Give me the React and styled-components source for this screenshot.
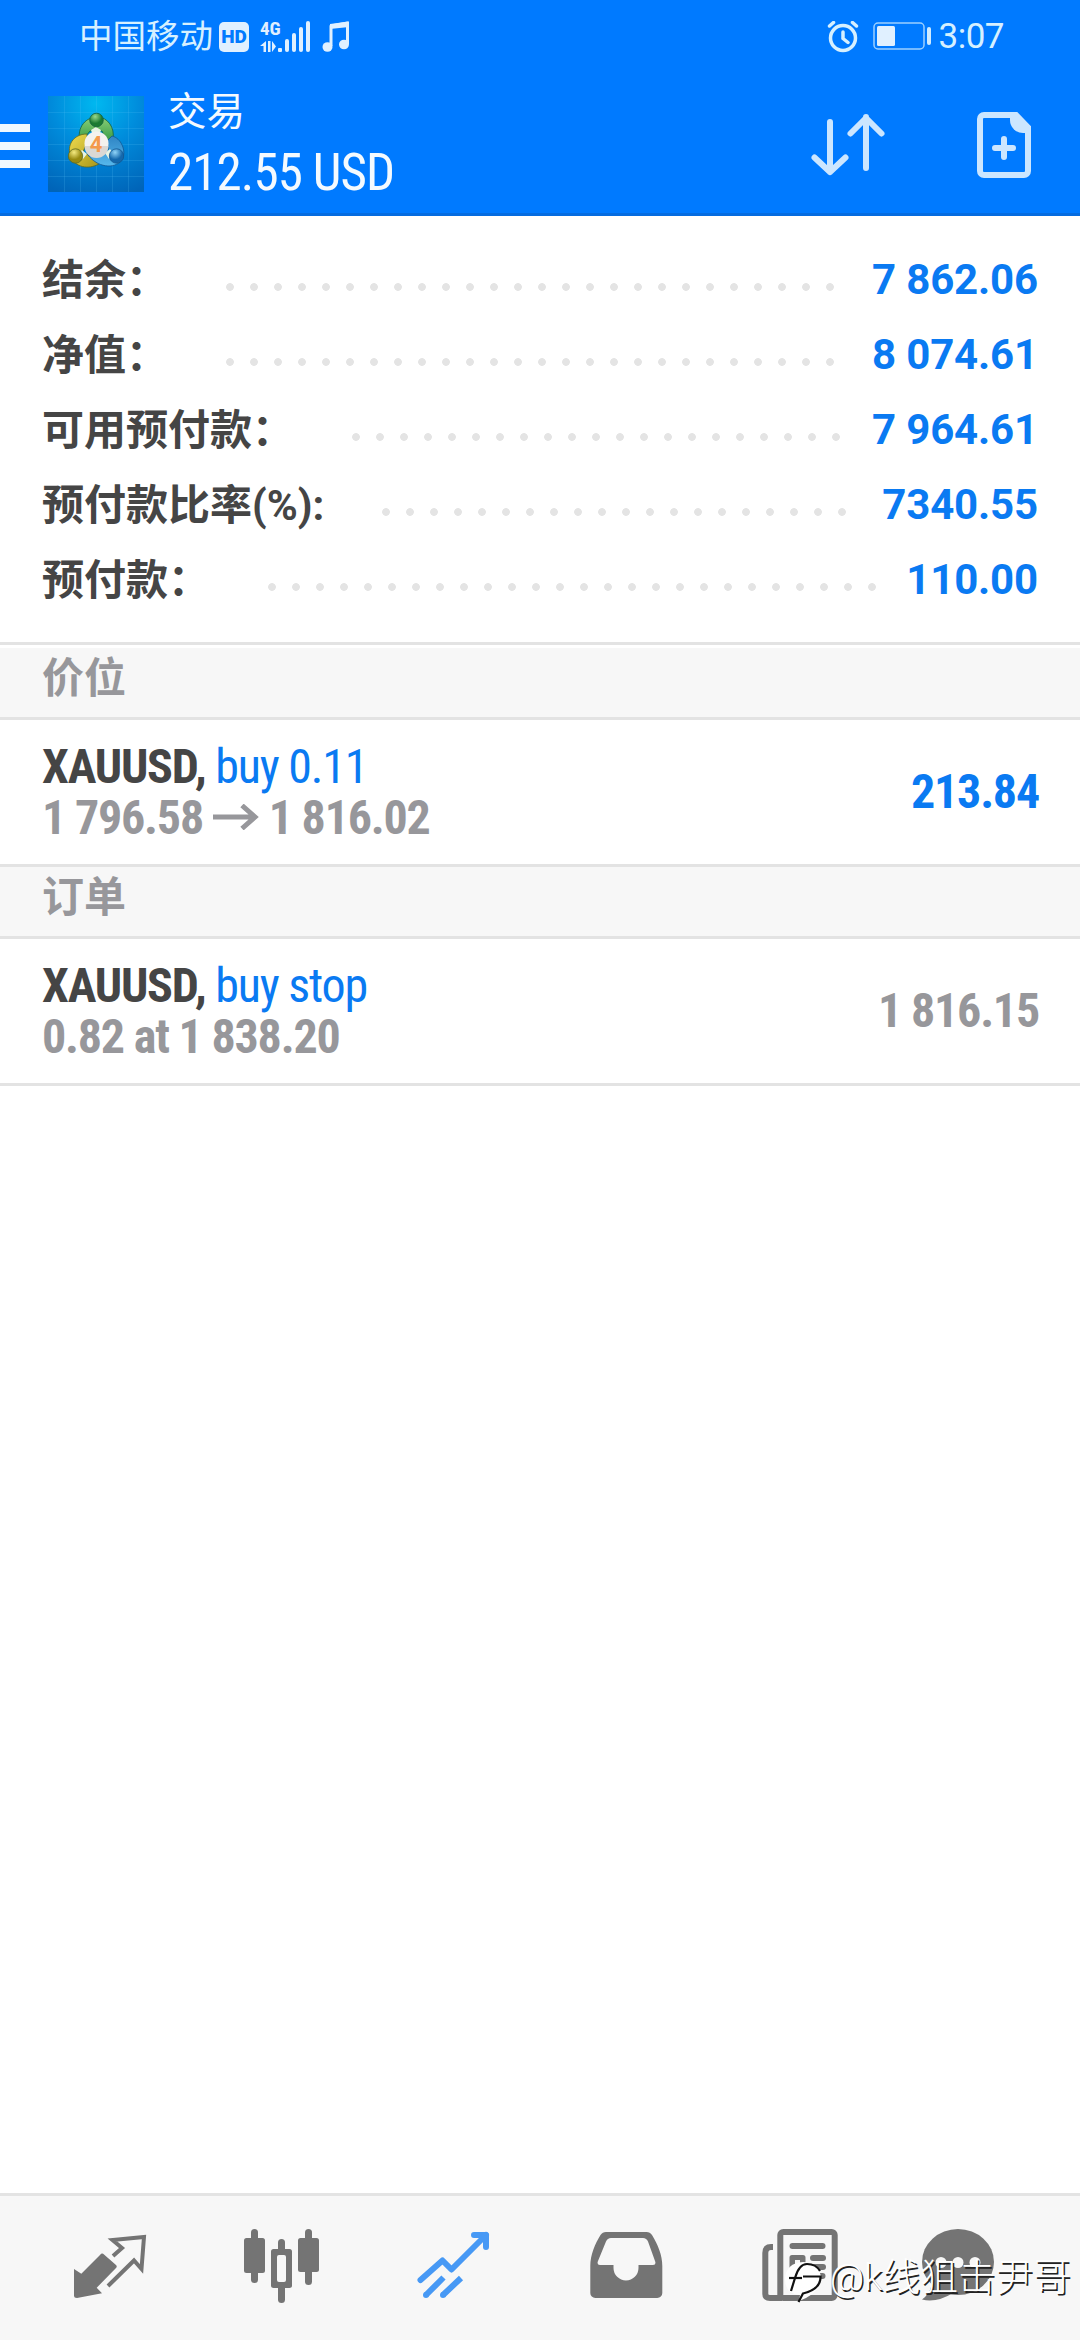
import React from 'react'

import styled, {createGlobalStyle} from "styled-components";

const ACCOUNT = [
    {label: "结余：", value: "7 862.06"},
    {label: "净值：", value: "8 074.61"},
    {label: "可用预付款：", value: "7 964.61"},
    {label: "预付款比率(%):", value: "7340.55"},
    {label: "预付款：", value: "110.00"},
];

const App = () => {
    return (
        <Screen>
            <GlobalStyle />
            <Header>
                <StatusBar>
                    <Carrier>中国移动</Carrier>
                    <HdBadge>HD</HdBadge>
                    <SignalIcon />
                    <MusicIcon />
                    <Spacer />
                    <AlarmIcon />
                    <BatteryIcon />
                    <Clock>3:07</Clock>
                </StatusBar>
                <Toolbar>
                    <Hamburger>
                        <i />
                        <i />
                        <i />
                    </Hamburger>
                    <LogoIcon />
                    <Titles>
                        <Title>交易</Title>
                        <Profit>212.55 USD</Profit>
                    </Titles>
                    <Spacer />
                    <SortIcon />
                    <NewOrderIcon />
                </Toolbar>
            </Header>
            <Summary>
                {ACCOUNT.map(({label, value}) => (
                    <SummaryRow key={label}>
                        <SummaryLabel>{label}</SummaryLabel>
                        <Leader />
                        <SummaryValue>{value}</SummaryValue>
                    </SummaryRow>
                ))}
            </Summary>
            <SectionTitle $inset>价位</SectionTitle>
            <Trade>
                <div>
                    <TradeLine><b>XAUUSD,</b> <span>buy 0.11</span></TradeLine>
                    <TradePrice>1 796.58 <ArrowIcon /> 1 816.02</TradePrice>
                </div>
                <TradeValue $active>213.84</TradeValue>
            </Trade>
            <SectionTitle>订单</SectionTitle>
            <Trade>
                <div>
                    <TradeLine><b>XAUUSD,</b> <span>buy stop</span></TradeLine>
                    <TradePrice>0.82 at 1 838.20</TradePrice>
                </div>
                <TradeValue>1 816.15</TradeValue>
            </Trade>
            <Spacer />
            <TabBar>
                <QuotesIcon />
                <CandlesIcon />
                <TrendIcon />
                <InboxIcon />
                <NewsIcon />
                <ChatIcon />
                <Watermark>
                    <WatermarkLogo />
                    <span>@k线狙击尹哥</span>
                </Watermark>
            </TabBar>
        </Screen>
    )
}

const SignalIcon = () => (
    <Signal>
        <SignalType>4G</SignalType>
        <svg width="52" height="32" viewBox="0 0 52 32" fill="#e0f0ff">
            <path d="M6 20v11H3.500v-6H0zM8 20h2.500v11H8zM12 20v11l4-5.500z" />
            <rect x="18" y="27" width="4" height="4" rx="1" />
            <rect x="25" y="18" width="4" height="13" rx="2" />
            <rect x="32" y="12" width="4" height="19" rx="2" />
            <rect x="39" y="6" width="4" height="25" rx="2" />
            <rect x="46" y="0" width="4" height="31" rx="2" />
        </svg>
    </Signal>
)

const MusicIcon = () => (
    <Music width="28" height="32" viewBox="0 0 28 32" fill="#e0f0ff">
        <path d="M9 25V5L25.500 2V23" fill="none" stroke="#e0f0ff" strokeWidth="3" strokeLinejoin="round" />
        <path d="M8 3L27 0.500V6L8 8z" />
        <ellipse cx="5.500" cy="26" rx="5" ry="4.800" />
        <ellipse cx="22" cy="23.500" rx="5" ry="4.800" />
    </Music>
)

const AlarmIcon = () => (
    <svg width="32" height="32" viewBox="0 0 32 32" fill="none" stroke="#d6f0ff" strokeWidth="3.500" strokeLinecap="round">
        <circle cx="16" cy="17" r="12.500" />
        <path d="M16 11v6.500l5 4M2.500 5l4-3.500M29.500 5l-4-3.500" />
    </svg>
)

const BatteryIcon = () => (
    <Battery width="59" height="29" viewBox="0 0 59 29">
        <rect x="1" y="1" width="50" height="26" rx="4" fill="none" stroke="#9cd0ff" strokeWidth="1.500" />
        <rect x="4" y="4" width="18" height="20" rx="1.500" fill="#e0f0ff" />
        <rect x="54" y="5" width="4" height="18" rx="2" fill="#d0ebff" />
    </Battery>
)

const LogoIcon = () => (
    <Logo width="96" height="96" viewBox="0 0 96 96">
        <defs>
            <radialGradient id="sky" cx="0.5" cy="0.08" r="1">
                <stop offset="0" stopColor="#00b8f0" />
                <stop offset="0.45" stopColor="#008cdc" />
                <stop offset="1" stopColor="#0064b8" />
            </radialGradient>
            <linearGradient id="green" x2="0" y2="1">
                <stop offset="0" stopColor="#8ccf78" />
                <stop offset="1" stopColor="#23903a" />
            </linearGradient>
            <linearGradient id="yellow" x2="1" y2="1">
                <stop offset="0" stopColor="#f0dc50" />
                <stop offset="1" stopColor="#a89618" />
            </linearGradient>
            <linearGradient id="blue" x2="0" y2="1">
                <stop offset="0" stopColor="#2f84c4" />
                <stop offset="1" stopColor="#56b8ec" />
            </linearGradient>
            <radialGradient id="headGreen" cx="0.4" cy="0.25">
                <stop offset="0" stopColor="#9ada8c" />
                <stop offset="1" stopColor="#1b7a32" />
            </radialGradient>
            <radialGradient id="headYellow" cx="0.4" cy="0.25">
                <stop offset="0" stopColor="#f4ea80" />
                <stop offset="1" stopColor="#988a10" />
            </radialGradient>
            <radialGradient id="headBlue" cx="0.4" cy="0.25">
                <stop offset="0" stopColor="#90d4f8" />
                <stop offset="1" stopColor="#1468ac" />
            </radialGradient>
        </defs>
        <rect width="96" height="96" fill="url(#sky)" />
        <path
            d="M0 16.500H96M0 32.500H96M0 48.500H96M0 64.500H96M0 80.500H96M16.500 0V96M32.500 0V96M48.500 0V96M64.500 0V96M80.500 0V96"
            stroke="#60c8f8"
            strokeOpacity="0.18"
        />
        <g stroke="#14603c" strokeWidth="0.8">
            <path d="M32 47C28 30 39 21 49 21C60 21 67 32 65 43L61 50L54 35L42 35Z" fill="url(#green)" />
            <path d="M39 38C25 38 18 50 23 61C27 71 40 74 51 68L42 60L35 56L39 46Z" fill="url(#yellow)" stroke="#5d6a20" />
            <path d="M64 40C73 42 79 55 74 64C66 74 49 71 40 59L52 59L62 56L58 46Z" fill="url(#blue)" stroke="#125792" />
        </g>
        <path d="M43 34l5-3 5 3-2 6h-6zM34 54l5 4-4 5-5-5zM62 53l-5 4 4 6 5-4z" fill="#e8f4e4" />
        <circle cx="48.500" cy="24" r="6.800" fill="url(#headGreen)" stroke="#14603c" strokeWidth="0.800" />
        <circle cx="27.500" cy="60" r="7.200" fill="url(#headYellow)" stroke="#5d6a20" strokeWidth="0.800" />
        <circle cx="68.500" cy="60" r="7.200" fill="url(#headBlue)" stroke="#125792" strokeWidth="0.800" />
        <circle cx="48.500" cy="47.500" r="12" fill="#f4f2ee" />
        <path d="M36.500 50h24a12 12 0 0 1-24 0z" fill="#dad8d4" />
        <text x="48" y="55.500" textAnchor="middle" fontFamily="Roboto" fontWeight="700" fontSize="22" fill="#f49a4c">4</text>
    </Logo>
)

const SortIcon = () => (
    <Sort width="76" height="66" viewBox="0 0 76 66" fill="none" stroke="#cce6ff" strokeWidth="6" strokeLinecap="round" strokeLinejoin="round">
        <path d="M20 10V60M4.500 45.500L20 60L35.500 45.500" />
        <path d="M56 56V5M40.500 21.500L56 6L71.500 21.500" />
    </Sort>
)

const NewOrderIcon = () => (
    <svg width="56" height="68" viewBox="0 0 56 68" fill="none" stroke="#cce6ff" strokeWidth="6">
        <path d="M8 4H40L52 16.500V60a4 4 0 0 1-4 4H8a4 4 0 0 1-4-4V8a4 4 0 0 1 4-4z" />
        <path d="M34 4H41L54 17V22H47a13 13 0 0 1-13-13z" fill="#cce6ff" stroke="none" />
        <path d="M28 28V46M19 37H37" strokeLinecap="round" />
    </svg>
)

const ArrowIcon = () => (
    <Arrow width="46" height="26" viewBox="0 0 46 26" fill="none" stroke="#97979b" strokeWidth="5">
        <path d="M0 13H42M29 1.500L42 13L29 24.500" />
    </Arrow>
)

const QuotesIcon = () => (
    <TabIcon viewBox="0 0 96 96">
        <path d="M12 49L19.300 53.700L38 35Q40 32.500 42 34.500L54 45Q55.500 46.500 54 48L34.700 67.700L40 73.300L15 78Q12 78 12 75.500z" />
        <path d="M51 36L60 28L50.500 20L82 17L79.500 49L72 40.500L46 66" fill="none" stroke="#747474" strokeWidth="4" />
    </TabIcon>
)

const CandlesIcon = () => (
    <TabIcon viewBox="0 0 96 96">
        <rect x="17" y="9" width="7" height="54" rx="3.500" />
        <rect x="10" y="18" width="21" height="35" rx="2.500" />
        <rect x="44" y="19" width="7" height="64" rx="3.500" />
        <rect x="37" y="29" width="21" height="39" rx="2.500" />
        <rect x="43" y="35" width="9" height="27" rx="2" fill="#f7f7f7" />
        <rect x="71" y="9" width="7" height="56" rx="3.500" />
        <rect x="64" y="18" width="21" height="34" rx="2.500" />
    </TabIcon>
)

const TrendIcon = () => (
    <TabIcon viewBox="0 0 96 96">
        <g fill="none" stroke="#4799f5" strokeWidth="6" strokeLinejoin="round">
            <path d="M14.500 60L36.500 40.500L45.500 49.500L80 15" strokeLinecap="round" />
            <path d="M68 15H80V27" strokeLinecap="round" />
            <path d="M20 75L37.500 57.500M37 75L55 58" />
        </g>
        <circle cx="20" cy="75" r="3" fill="#4799f5" />
        <circle cx="37" cy="75" r="3" fill="#4799f5" />
    </TabIcon>
)

const InboxIcon = () => (
    <TabIcon viewBox="0 0 96 96">
        <path
            fillRule="evenodd"
            d="M28 12H68.500Q72 12 74 15C80 25 84.300 35 84.300 46V73a5 5 0 0 1-5 5H17.300a5 5 0 0 1-5-5V46C12.300 35 17 24 22.500 15Q24.500 12 28 12zM33 18Q29.500 18 28 21.500L20 41Q18.500 45 22 45H35.500V48a12.500 12.500 0 0 0 25 0V45H75Q78.500 45 77 41L70 21.500Q68.500 18 65 18z"
        />
    </TabIcon>
)

const NewsIcon = () => (
    <TabIcon viewBox="0 0 96 96">
        <g fill="none" stroke="#747474" strokeWidth="6">
            <rect x="30.300" y="12" width="54.400" height="66" rx="3" />
            <path d="M23 27H21Q15.300 27 15.300 33V74Q15.300 78 20 78H32" />
        </g>
        <rect x="39.500" y="23" width="36" height="6" rx="3" />
        <path fillRule="evenodd" d="M42 35H53a2.500 2.500 0 0 1 2.500 2.500V50H39.500V37.500A2.500 2.500 0 0 1 42 35zM45 40V45H50V40z" />
        <rect x="60" y="35" width="16" height="6" rx="3" />
        <rect x="60" y="44" width="16" height="6" rx="3" />
        <rect x="39.500" y="53" width="36" height="6" rx="3" />
    </TabIcon>
)

const ChatIcon = () => (
    <TabIcon viewBox="0 0 96 96">
        <ellipse cx="48" cy="42" rx="36" ry="33" />
        <path d="M22 62Q21 73 12 79.500Q27 83 43 73z" />
        <g fill="#f7f7f7">
            <circle cx="31" cy="42.500" r="5.500" />
            <circle cx="48" cy="42.500" r="5.500" />
            <circle cx="65" cy="42.500" r="5.500" />
        </g>
    </TabIcon>
)

const WatermarkLogo = () => (
    <LogoMark width="45" height="46" viewBox="0 0 45 46">
        <path d="M18 8A18 17 0 0 1 36 24Q36 39 14 47L15 41Q0 40 0 25Q1 9 18 8z" fill="#fff" />
        <g fill="none" stroke="#111" strokeWidth="2.200">
            <path d="M6 37L10 24Q14 10 22 10Q31 10 35 17" />
            <path d="M4 24H17" />
            <path d="M18 22.500H35.500Q36 35 18 39.500L13.500 48" />
        </g>
    </LogoMark>
)

const GlobalStyle = createGlobalStyle`
    * {
        box-sizing: border-box;
    }

    body {
        margin: 0;
        background: #fff;
        font-family: Roboto, "Noto Sans CJK SC", sans-serif;
    }

    svg {
        display: block;
        flex-shrink: 0;
    }
`;

const Screen = styled.div`
    display: flex;
    flex-direction: column;
    width: 1080px;
    height: 2340px;
    overflow: hidden;
`;

const Spacer = styled.div`
    flex: 1;
`;

const Header = styled.header`
    height: 216px;
    background: #007aff;
    border-bottom: 3px solid #056ce0;
`;

const StatusBar = styled.div`
    display: flex;
    align-items: center;
    height: 72px;
    padding: 1px 76px 0 79px;
`;

const Carrier = styled.span`
    font-size: 33.500px;
    line-height: 40px;
    color: #d6f0ff;
`;

const HdBadge = styled.span`
    width: 30px;
    height: 30px;
    margin-left: 6px;
    border-radius: 5px;
    background: #e0f0ff;
    color: #007aff;
    font-size: 19px;
    font-weight: 900;
    line-height: 30px;
    text-align: center;
`;

const Signal = styled.div`
    position: relative;
    margin-left: 11px;
`;

const SignalType = styled.span`
    position: absolute;
    left: 0;
    top: -2px;
    font-size: 19px;
    font-weight: 700;
    font-stretch: 75%;
    line-height: 19px;
    color: #e0f0ff;
`;

const Music = styled.svg`
    margin-left: 10px;
`;

const Battery = styled.svg`
    margin-left: 14px;
`;

const Clock = styled.span`
    margin-left: 7px;
    font-size: 35px;
    letter-spacing: -0.500px;
    color: #d6f0ff;
`;

const Toolbar = styled.div`
    display: flex;
    align-items: center;
    height: 141px;
    padding: 4px 48px 0 0;
`;

const Hamburger = styled.div`
    display: grid;
    gap: 10px;
    width: 30px;
    padding-top: 2px;

    i {
        height: 8px;
        background: #f0f8ff;
    }
`;

const Logo = styled.svg`
    margin: -1px 0 0 18px;
`;

const Titles = styled.div`
    margin-left: 24px;
    color: #f4faff;
`;

const Title = styled.div`
    font-size: 38.500px;
    line-height: 56px;
`;

const Profit = styled.div`
    font-family: "Roboto Condensed", Roboto, sans-serif;
    font-stretch: 75%;
    font-size: 51px;
    line-height: 65px;
    letter-spacing: -0.900px;
`;

const Sort = styled.svg`
    margin-right: 90px;
`;

const Summary = styled.section`
    height: 429px;
    padding: 26px 42px 0;
    border-bottom: 3px solid #e3e3e3;
    color: #454545;
`;

const SummaryRow = styled.div`
    display: flex;
    height: 75px;
    line-height: 75px;
    font-size: 42px;
    font-weight: 700;
`;

const SummaryLabel = styled.span`
    padding-top: 1px;
    white-space: nowrap;
`;

const Leader = styled.span`
    flex: 1;
    height: 8px;
    margin: 41px 26px 0 58px;
    background: radial-gradient(circle at 4px 4px, #e4e4e4 3.500px, transparent 4.200px) 0 0 / 24px 8px repeat-x;
`;

const SummaryValue = styled.span`
    color: #0a7af2;
    letter-spacing: -0.150px;
`;

const SectionTitle = styled.h2`
    height: ${({$inset}) => $inset ? "75px" : "72px"};
    margin: 0;
    padding-left: 42px;
    border-top: ${({$inset}) => $inset ? "3px solid #fff" : "0"};
    border-bottom: 3px solid #e3e3e3;
    background: #f7f7f7;
    color: #97979b;
    font-size: 42px;
    font-weight: 700;
    line-height: 62px;
`;

const Trade = styled.div`
    display: flex;
    justify-content: space-between;
    align-items: center;
    height: 147px;
    padding: 0 41px 0 42px;
    border-bottom: 3px solid #e3e3e3;
    font-family: "Roboto Condensed", Roboto, sans-serif;
    font-stretch: 75%;
    font-size: 48px;
    line-height: 51px;
    letter-spacing: -1.200px;
`;

const TradeLine = styled.div`
    color: #454545;

    span {
        color: #0a7af2;
    }
`;

const TradePrice = styled.div`
    color: #97979b;
    font-weight: 700;
`;

const Arrow = styled.svg`
    display: inline-block;
    vertical-align: 4px;
`;

const TradeValue = styled.span`
    margin-top: -1px;
    color: ${({$active}) => $active ? "#0a7af2" : "#97979b"};
    font-weight: 700;
`;

const TabBar = styled.nav`
    position: relative;
    display: grid;
    grid-template-columns: repeat(5, 172px) 148px;
    justify-items: center;
    align-items: center;
    height: 147px;
    padding-left: 24px;
    border-top: 3px solid #e3e3e3;
    background: #f7f7f7;
`;

const TabIcon = styled.svg`
    width: 96px;
    height: 96px;
    fill: #747474;
`;

const Watermark = styled.div`
    position: absolute;
    right: 9px;
    bottom: 40px;
    display: flex;
    align-items: center;
    color: #fff;
    font-size: 37.700px;
    font-weight: 300;
    line-height: 46px;
    text-shadow: 1.500px 1.500px 0 #222;
    white-space: nowrap;
`;

const LogoMark = styled.svg`
    overflow: visible;
`;

export default App
